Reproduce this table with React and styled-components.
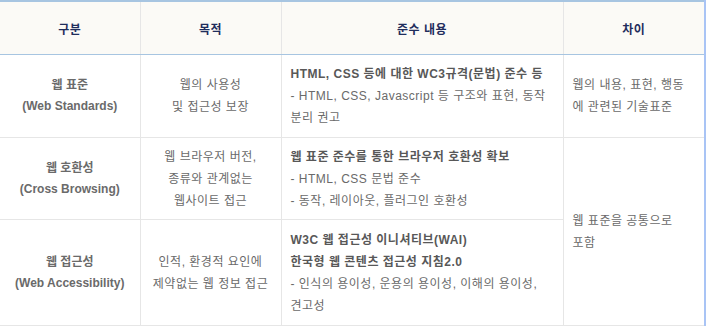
import React from 'react';
import styled, { createGlobalStyle } from 'styled-components';

const GlobalStyle = createGlobalStyle`
  html, body {
    margin: 0;
    padding: 0;
    background: #ffffff;
  }
  body {
    font-family: "Liberation Sans", "Noto Sans CJK KR", sans-serif;
    font-size: 12px;
  }
`;

const TableWrapper = styled.div`
  width: 704px;
  border-right: 2px solid #a9c4f5;
`;

const Table = styled.table`
  width: 704px;
  border-collapse: collapse;
  table-layout: fixed;
  border-top: 2px solid #a7c5e1;
`;

const HeadCell = styled.th`
  height: 52px;
  padding: 0;
  background: #fbfaf6;
  color: #1f2d5c;
  font-weight: bold;
  font-size: 12px;
  letter-spacing: 0.5px;
  text-align: center;
  border-left: 1px solid #e6e6e6;
  border-bottom: 1px solid #a7c5e1;

  &:first-child {
    border-left: none;
  }
`;

const Cell = styled.td`
  height: ${p => p.$h}px;
  padding: 0 ${p => (p.$align === 'left' ? '9px' : '2px')};
  color: #6a6a6a;
  font-size: 12px;
  line-height: 22px;
  letter-spacing: 0.5px;
  text-align: ${p => p.$align || 'center'};
  vertical-align: middle;
  border-left: 1px solid #e6e6e6;
  border-bottom: 1px solid #e6e6e6;
  word-break: keep-all;
  white-space: nowrap;

  &:first-child {
    border-left: none;
  }
`;

const Title = styled.div`
  font-weight: bold;
  color: #6a6a6a;
  line-height: 21px;
  letter-spacing: 0;
`;

const Strong = styled.div`
  font-weight: bold;
  color: #585858;
`;

const Line = styled.div``;

const rows = [
  {
    h: 82,
    title: ['웹 표준', '(Web Standards)'],
    purpose: ['웹의 사용성', '및 접근성 보장'],
    strong: ['HTML, CSS 등에 대한 WC3규격(문법) 준수 등'],
    items: ['- HTML, CSS, Javascript 등 구조와 표현, 동작', '분리 권고'],
    diff: ['웹의 내용, 표현, 행동', '에 관련된 기술표준'],
  },
  {
    h: 81,
    title: ['웹 호환성', '(Cross Browsing)'],
    purpose: ['웹 브라우저 버전,', '종류와 관계없는', '웹사이트 접근'],
    strong: ['웹 표준 준수를 통한 브라우저 호환성 확보'],
    items: ['- HTML, CSS 문법 준수', '- 동작, 레이아웃, 플러그인 호환성'],
    diff: ['웹 표준을 공통으로', '포함'],
    diffSpan: 2,
  },
  {
    h: 105,
    title: ['웹 접근성', '(Web Accessibility)'],
    purpose: ['인적, 환경적 요인에', '제약없는 웹 정보 접근'],
    strong: ['W3C 웹 접근성 이니셔티브(WAI)', '한국형 웹 콘텐츠 접근성 지침2.0'],
    items: ['- 인식의 용이성, 운용의 용이성, 이해의 용이성,', '견고성'],
  },
];

export default function App() {
  return (
    <>
      <GlobalStyle />
      <TableWrapper>
        <Table>
          <colgroup>
            <col style={{ width: 140 }} />
            <col style={{ width: 141 }} />
            <col style={{ width: 282 }} />
            <col style={{ width: 141 }} />
          </colgroup>
          <thead>
            <tr>
              <HeadCell>구분</HeadCell>
              <HeadCell>목적</HeadCell>
              <HeadCell>준수 내용</HeadCell>
              <HeadCell>차이</HeadCell>
            </tr>
          </thead>
          <tbody>
            {rows.map((r, i) => (
              <tr key={i}>
                <Cell $h={r.h}>
                  {r.title.map(t => <Title key={t}>{t}</Title>)}
                </Cell>
                <Cell $h={r.h}>
                  {r.purpose.map(t => <Line key={t}>{t}</Line>)}
                </Cell>
                <Cell $h={r.h} $align="left">
                  {r.strong.map(t => <Strong key={t}>{t}</Strong>)}
                  {r.items.map(t => <Line key={t}>{t}</Line>)}
                </Cell>
                {r.diff && (
                  <Cell $h={r.h} $align="left" rowSpan={r.diffSpan || 1}>
                    {r.diff.map(t => <Line key={t}>{t}</Line>)}
                  </Cell>
                )}
              </tr>
            ))}
          </tbody>
        </Table>
      </TableWrapper>
    </>
  );
}
